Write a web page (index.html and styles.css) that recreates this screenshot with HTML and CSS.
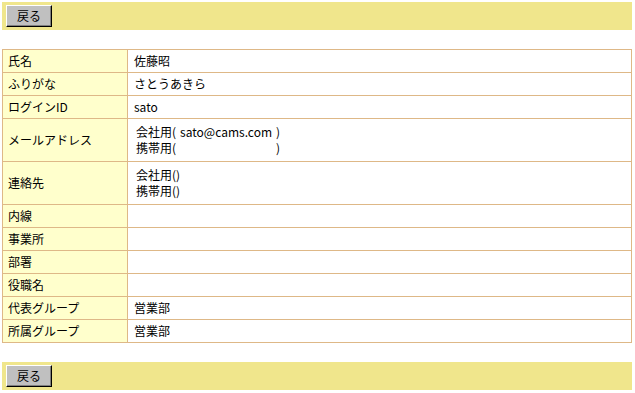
FILE: index.html
```html
<!DOCTYPE html>
<html lang="ja">
<head>
    <meta charset="UTF-8">
    <title>ユーザー情報</title>
    <link rel="stylesheet" href="styles.css">
</head>
<body>
    <div class="toolbar">
        <button class="btn-back">戻る</button>
    </div>

    <table class="info-table">
        <tr>
            <th>氏名</th>
            <td>佐藤昭</td>
        </tr>
        <tr>
            <th>ふりがな</th>
            <td>さとうあきら</td>
        </tr>
        <tr>
            <th>ログインID</th>
            <td>sato</td>
        </tr>
        <tr class="multi">
            <th>メールアドレス</th>
            <td>
                <div class="lines">
                    <div>会社用(<span class="field">sato@cams.com</span>)</div>
                    <div>携帯用(<span class="field"></span>)</div>
                </div>
            </td>
        </tr>
        <tr class="multi">
            <th>連絡先</th>
            <td>
                <div class="lines">
                    <div>会社用()</div>
                    <div>携帯用()</div>
                </div>
            </td>
        </tr>
        <tr>
            <th>内線</th>
            <td></td>
        </tr>
        <tr>
            <th>事業所</th>
            <td></td>
        </tr>
        <tr>
            <th>部署</th>
            <td></td>
        </tr>
        <tr>
            <th>役職名</th>
            <td></td>
        </tr>
        <tr>
            <th>代表グループ</th>
            <td>営業部</td>
        </tr>
        <tr>
            <th>所属グループ</th>
            <td>営業部</td>
        </tr>
    </table>

    <div class="toolbar toolbar-bottom">
        <button class="btn-back">戻る</button>
    </div>
</body>
</html>
```

FILE: styles.css
```css
:root {
    --bar-bg: #F0E68C;
    --label-bg: #FFFFCC;
    --line-color: #DEB887;
    --btn-bg: #C0C0C0;
}

body {
    font-family: "Noto Sans CJK JP", "DejaVu Sans", sans-serif;
    font-size: 12px;
    color: #000;
    background-color: #fff;
    margin: 2px;
    width: 630px;
}

.toolbar {
    background-color: var(--bar-bg);
    height: 28px;
    padding: 3px 4px;
    box-sizing: border-box;
}

.toolbar-bottom {
    margin-top: 19px;
}

.btn-back {
    width: 46px;
    height: 22px;
    padding: 0;
    font-family: inherit;
    font-size: 12px;
    line-height: 18px;
    color: #000;
    background-color: var(--btn-bg);
    border: 1px solid;
    border-color: #fff #000 #000 #fff;
    box-shadow: inset -1px -1px 0 #808080;
    cursor: pointer;
}

.info-table {
    width: 630px;
    margin-top: 19px;
    border-collapse: collapse;
    border: 1px solid var(--line-color);
}

.info-table th,
.info-table td {
    border: 1px solid var(--line-color);
    padding: 3px 6px;
    line-height: 16px;
    height: 16px;
    text-align: left;
    font-weight: normal;
    vertical-align: middle;
}

.info-table th {
    width: 113px;
    padding-left: 5px;
    background-color: var(--label-bg);
}

.info-table tr.multi th,
.info-table tr.multi td {
    padding-top: 5px;
    padding-bottom: 5px;
}

.lines {
    padding-left: 2px;
}

/* 括弧の中身は固定幅で中央寄せ */
.field {
    display: inline-block;
    width: 100px;
    text-align: center;
    vertical-align: top;
}
```
